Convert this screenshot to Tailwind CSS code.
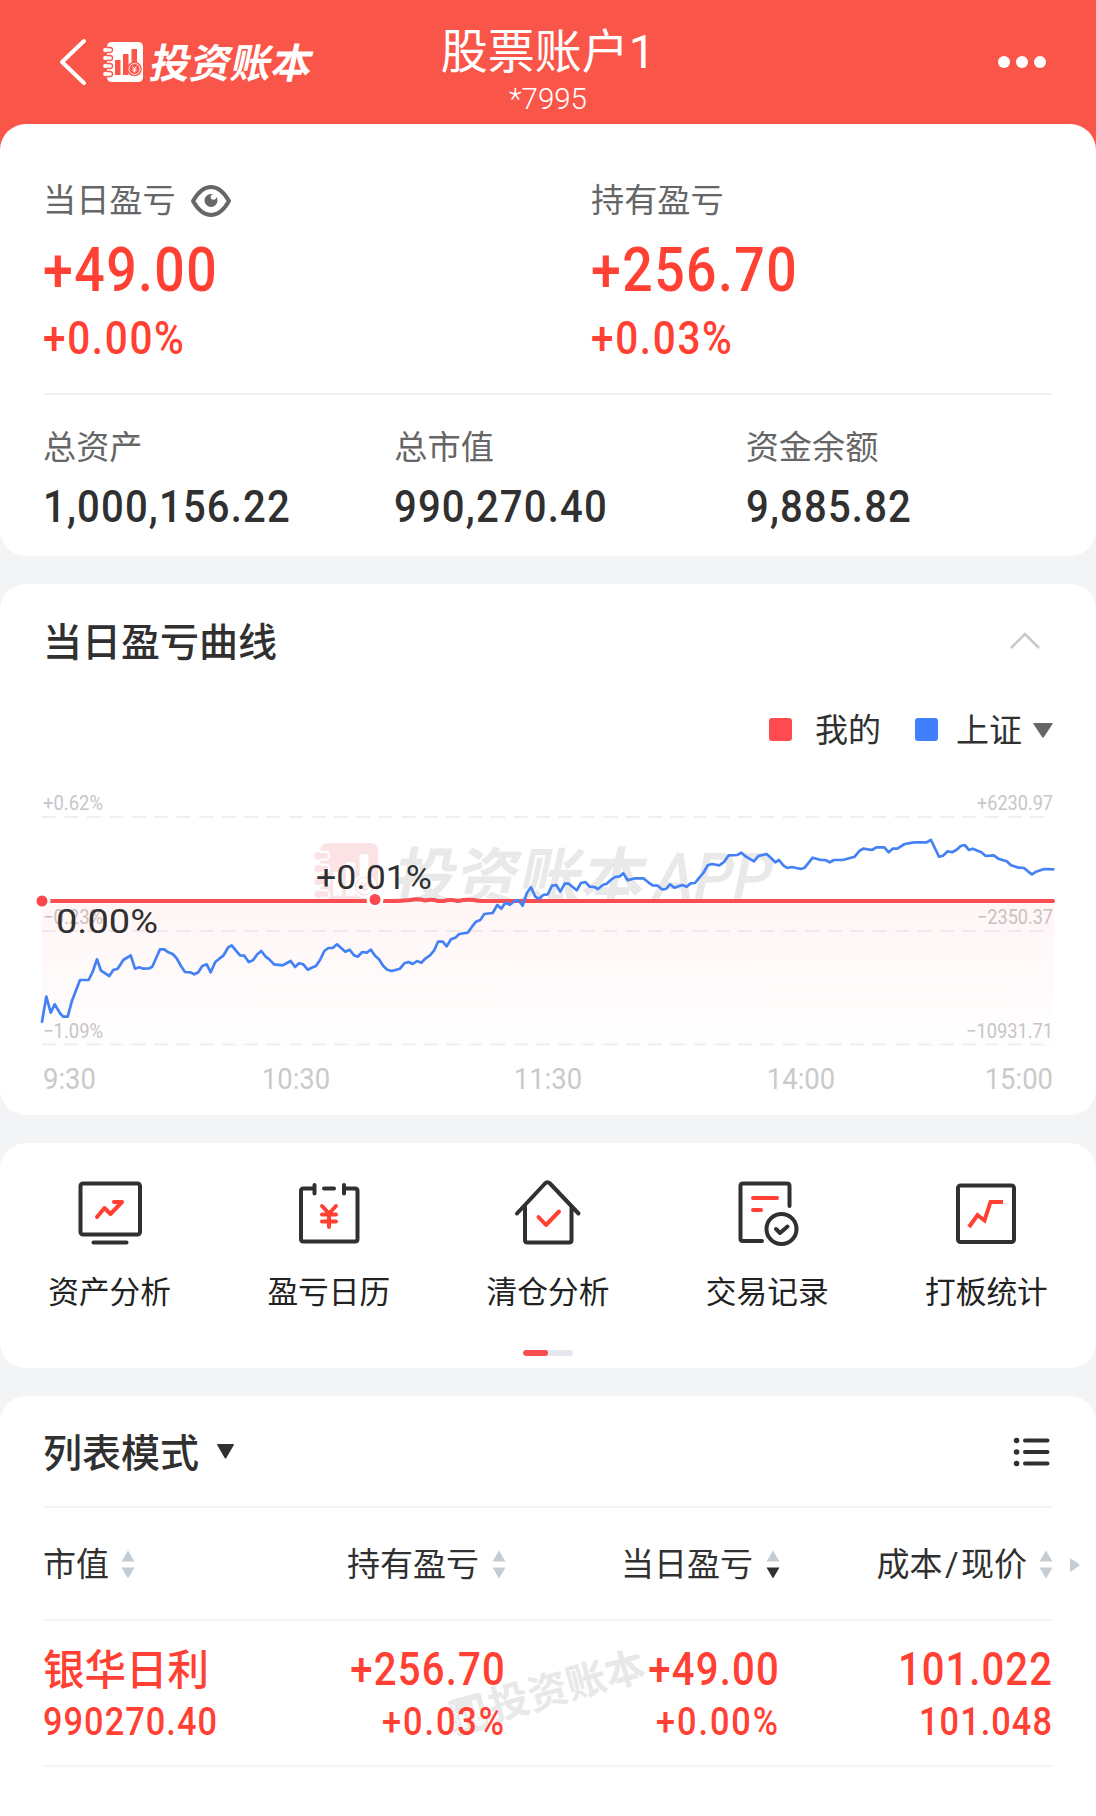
<!DOCTYPE html>
<html lang="zh-CN">
	<head>
		<title>投资账本 | 股票账户1</title>
		<meta charset="utf-8" />
		<meta name="viewport" content="width=device-width, initial-scale=1" />
		<script src="https://cdn.jsdelivr.net/npm/@tailwindcss/browser@4"></script>
	</head>
	<body class="bg-[#f3f4f6] text-[#303030] [font-family:Roboto,'Noto_Sans_CJK_SC',sans-serif]">
		<!-- shared notebook logo -->
		<svg class="hidden">
			<symbol id="logo" viewBox="0 0 40 40">
				<path
					fill-rule="evenodd"
					d="M9 0H35Q40 0 40 5V35Q40 40 35 40H9Q4 40 4 35V5Q4 0 9 0ZM12 18V33H17.500V18ZM20 12V33H25.500V12ZM28.500 7V20H34V7Z"
				/>
				<g fill="none" stroke="currentColor" stroke-width="4.6" stroke-linecap="round">
					<path d="M2.5 8H7M2.5 16H7M2.5 24H7M2.5 32H7" />
				</g>
				<g fill="none" stroke="var(--gap)" stroke-width="1.3" stroke-linecap="round">
					<path d="M4 5.5H7a2.5 2.5 0 0 1 0 5H4M4 13.5H7a2.5 2.5 0 0 1 0 5H4M4 21.5H7a2.5 2.5 0 0 1 0 5H4M4 29.5H7a2.5 2.5 0 0 1 0 5H4" />
				</g>
				<circle cx="31.5" cy="27" r="7.3" fill="var(--gap)" />
				<circle cx="31.5" cy="27" r="5.5" fill="none" stroke="currentColor" stroke-width=".9" />
				<path d="M29.5 24.500L31.5 26.500L33.500 24.500M29.5 27H33.500M29.500 28.800H33.500M31.500 26.500V30.500" fill="none" stroke="currentColor" stroke-width="1" />
			</symbol>
			<symbol id="sort-up" viewBox="0 0 14 12"><path d="M7 .5L13.5 11.5H.5Z" /></symbol>
			<symbol id="sort-down" viewBox="0 0 14 12"><path d="M.5 .5H13.5L7 11.5Z" /></symbol>
		</svg>

		<div class="bg-[#fa5549]">
			<header class="grid h-[124px] grid-cols-3 text-white">
				<div class="flex items-start pl-[58px] pt-[37px]">
					<svg class="h-[50px] w-[30px]" viewBox="0 0 30 50" fill="none" stroke="currentColor" stroke-width="4" stroke-linecap="round" stroke-linejoin="round">
						<path d="M26 4L4 25L26 46" />
					</svg>
					<svg class="ml-[15px] mt-[4.5px] h-[40px] w-[40px] [--gap:#fa5549]" fill="currentColor"><use href="#logo" /></svg>
					<span class="ml-[8px] mt-[5px] -skew-x-12 text-[40.5px] leading-[44px] font-bold whitespace-nowrap">投资账本</span>
				</div>
				<div class="flex flex-col items-center whitespace-nowrap">
					<h1 class="mt-[22px] pt-px text-[47px] leading-[57px] font-normal">股票账户1</h1>
					<p class="text-[29.5px] leading-[38px] font-light">*7995</p>
				</div>
				<div class="flex items-center justify-end gap-[6px] pr-[50px]">
					<i class="size-3 rounded-full bg-white"></i>
					<i class="size-3 rounded-full bg-white"></i>
					<i class="size-3 rounded-full bg-white"></i>
				</div>
			</header>
		</div>

		<!-- summary -->
		<div class="bg-linear-to-b from-[#fa5549] from-50% to-[#f3f4f6] to-50%">
			<section class="h-[432px] rounded-[26px] bg-white px-[43px] pt-[56px]">
				<div class="grid w-[1096px] grid-cols-2">
					<div>
						<div class="flex items-center text-[33.2px] leading-[40px] text-[#666]">
							<span class="pt-px">当日盈亏</span>
							<svg class="ml-[14px] h-[34px] w-[42px]" viewBox="0 0 42 34" fill="none" stroke="#666">
								<path d="M3 17Q11 3 21 3T39 17Q31 31 21 31T3 17Z" stroke-width="4" stroke-linejoin="round" />
								<circle cx="21" cy="16.5" r="6.5" fill="#666" stroke="none" />
								<circle cx="23.5" cy="13" r="2.8" fill="#fff" stroke="none" />
							</svg>
						</div>
						<p class="mt-[17px] origin-left scale-x-88 text-[61px] leading-[64px] font-medium tracking-[1.6px] text-[#ff4033]">+49.00</p>
						<p class="mt-[14px] origin-left scale-x-88 text-[46px] leading-[44px] font-medium tracking-[1.9px] text-[#ff4033]">+0.00%</p>
					</div>
					<div>
						<p class="pt-px text-[33.2px] leading-[40px] text-[#666]">持有盈亏</p>
						<p class="mt-[17px] origin-left scale-x-88 text-[61px] leading-[64px] font-medium tracking-[1.6px] text-[#ff4033]">+256.70</p>
						<p class="mt-[14px] origin-left scale-x-88 text-[46px] leading-[44px] font-medium tracking-[1.9px] text-[#ff4033]">+0.03%</p>
					</div>
				</div>
				<div class="mt-[33px] h-[2px] bg-[#f1f2f4]"></div>
				<div class="mt-[33px] grid w-[1054px] grid-cols-3">
					<div>
						<p class="text-[33.2px] leading-[40px] text-[#666]">总资产</p>
						<p class="mt-[17px] origin-left scale-x-90 text-[44.5px] leading-[44px] font-medium tracking-[1.3px]">1,000,156.22</p>
					</div>
					<div>
						<p class="text-[33.2px] leading-[40px] text-[#666]">总市值</p>
						<p class="mt-[17px] origin-left scale-x-90 text-[44.5px] leading-[44px] font-medium tracking-[1.3px]">990,270.40</p>
					</div>
					<div>
						<p class="text-[33.2px] leading-[40px] text-[#666]">资金余额</p>
						<p class="mt-[17px] origin-left scale-x-90 text-[44.5px] leading-[44px] font-medium tracking-[1.3px]">9,885.82</p>
					</div>
				</div>
			</section>
		</div>

		<!-- intraday curve -->
		<section class="mt-[28px] h-[531px] rounded-[26px] bg-white pt-[34px]">
			<div class="flex items-center justify-between pr-[55px] pl-[43px]">
				<h2 class="text-[39px] leading-[50px] font-medium">当日盈亏曲线</h2>
				<svg class="mb-[4px] h-[20px] w-[32px]" viewBox="0 0 32 20" fill="none" stroke="#c8c8c8" stroke-width="2.6"><path d="M2 17L16 3L30 17" /></svg>
			</div>
			<div class="mt-[42px] flex items-center justify-end pr-[43px] text-[33px] leading-[42px]">
				<i class="mb-[3px] size-[23px] rounded-[3px] bg-[#ff4b4f]"></i>
				<span class="ml-[23px]">我的</span>
				<i class="mb-[3px] ml-[34px] size-[23px] rounded-[3px] bg-[#427fff]"></i>
				<span class="ml-[18px]">上证</span>
				<svg class="mb-[2px] ml-[11px] h-[15px] w-[20px]" viewBox="0 0 20 15" fill="#666"><path d="M1 0H19Q20 0 19.500 1L11 14Q10 15 9 14L.5 1Q0 0 1 0Z" /></svg>
			</div>
			<svg class="mt-[28px] block h-[276px] w-full" viewBox="0 780 1096 276">
				<defs>
					<linearGradient id="fade" x1="0" y1="0" x2="0" y2="1">
						<stop offset="0" stop-color="#ff4b4f" stop-opacity="0.055" />
						<stop offset="1" stop-color="#ff4b4f" stop-opacity="0.005" />
					</linearGradient>
					<clipPath id="above"><rect x="300" y="830" width="520" height="72" /></clipPath>
				</defs>
				<g clip-path="url(#above)" fill="#e9e9ea" font-weight="700">
					<use href="#logo" x="314" y="843" width="64" height="64" fill="#fbe2e4" color="#fbe2e4" class="[--gap:#fff]" />
					<text transform="translate(390 900) skewX(-12)" font-size="63">投资账本</text>
					<text transform="translate(650 900) skewX(-12)" font-size="66" font-weight="500" textLength="118" lengthAdjust="spacingAndGlyphs">APP</text>
				</g>
				<path d="M42 817H1046M42 931H1046M42 1044.600H1046" stroke="#efeff0" stroke-width="2" stroke-dasharray="14 8.45" />
				<g font-size="20" fill="#c6c6c8">
					<text x="43" y="810" textLength="60" lengthAdjust="spacingAndGlyphs">+0.62%</text>
					<text x="43" y="924" textLength="60" lengthAdjust="spacingAndGlyphs">−0.23%</text>
					<text x="43" y="1037.500" textLength="60" lengthAdjust="spacingAndGlyphs">−1.09%</text>
					<g text-anchor="end">
						<text x="1053" y="810" textLength="76" lengthAdjust="spacingAndGlyphs">+6230.97</text>
						<text x="1053" y="924" textLength="76" lengthAdjust="spacingAndGlyphs">−2350.37</text>
						<text x="1053" y="1037.500" textLength="87" lengthAdjust="spacingAndGlyphs">−10931.71</text>
					</g>
				</g>
				<rect x="42" y="901" width="1012" height="144" fill="url(#fade)" />
				<path
					d="M42 901H398L410 900Q418 898.500 425 900.500Q432 899 438 901H444Q450 899 458 901Q466 899 474 900Q478 901 482 901H1053"
					fill="none"
					stroke="#f84d51"
					stroke-width="4"
					stroke-linecap="round"
				/>
				<polyline
					fill="none"
					stroke="#4381f4"
					stroke-width="2.7"
					stroke-linejoin="round"
					stroke-linecap="round"
					points="42,1021.7 46.3,996.7 50.7,1012.7 54.7,1004.3 60,1013.3 63.3,1016.7 67.7,1016.7 72,1000.7 80,980 88.7,980 92.7,971.7 97,959.3 101,970.7 109.3,976 113.3,970 117.7,968.7 123.3,960 130.7,955.3 135,968.7 139.3,967.3 143.3,968.7 149.3,968.3 152.3,966.7 160,949.3 164.3,949.3 168.3,952.3 172.7,954 176.7,958.3 181,966 185,972 190,972.3 194.3,974.3 198.3,972.3 202.3,966 206.7,964.3 210.7,972.3 215.3,962 219.3,958.7 223.3,955.7 228.3,947.3 231.7,945.3 236,950.7 240,955.3 244.3,955.7 248.7,962 253,960.3 257.3,954.3 261.3,951 265.7,956.7 269.3,959.3 274,964.3 282.7,965.3 290.7,961 295,967 299,963.3 303.3,964.3 307.7,969.7 311.7,967.7 316,966 320,960 324.3,951 328.3,948 332.7,948 337,944.3 345.3,951.7 349.7,949.7 354,955.3 357.7,956.7 362.3,952 366.7,952.7 371,949.7 375,955.7 379,959.3 383.3,966 387.3,969.7 391.7,971 400,968.7 404.3,963.3 408.7,962 412.7,964 417,961 421.3,962.7 425.7,958.3 429.7,955.7 434,950.7 438,941.7 442.7,941.7 446.7,946.3 451,939.3 455.3,937.7 459.3,934 467.7,932.7 472,926.7 476,921.7 480.3,920 484.3,914 492.7,913 497.3,905 501.3,908.7 505.3,902.7 510,904.7 514,901.3 518.3,900 522.7,905.7 526.7,893.3 531,887.3 535.3,896.7 538.7,899 543.3,895 547.7,894.3 552,885.7 556.3,885 560.3,891.7 564.7,883.7 568.7,883.7 576.7,890.3 581,883 585.3,882 589.7,886.7 594.3,887 598,889 602.7,885 606.7,883.7 610.7,880 615,877 620,876.3 623.3,873.3 627.7,880.3 635,878.3 643.3,878.3 648.3,882.3 652.7,885.3 657.7,885.7 662,889.3 666,889 670,884.3 674.3,887.7 682.3,885 686.7,886.7 690.7,883.3 695,883 699.3,877.7 703.3,873 707.7,865.3 712,864 719.3,865.3 724,862 728.7,855.3 737.3,855 741.3,852.7 746,856.7 754,861.3 758.3,856 766.7,854 771,858 775.3,862.3 779,860 783.3,865.3 787.3,868 792,867 800.7,869 804.7,867.7 812.7,857.7 820.7,860 825.3,860 829.7,862.3 834,860 842.7,860 854.7,856.7 859.3,851 863.3,848.7 872,850 876.3,847.3 884.3,847.3 888.7,852.3 892.7,848.7 897.3,848.7 904.7,844 914.3,842.3 926.7,842.3 931,840 935.3,849 939,856.7 943,855.7 947.7,851.3 952,852.3 956.7,849.7 960.7,846 964.7,845 969,850 972.7,848.7 981.3,852.3 985.7,856 993.7,855.3 998.3,858.7 1006.7,861.3 1011,865.3 1018.7,867.7 1024,868 1028,871.3 1032,874.3 1036,871.7 1044.3,869 1053.3,869.3"
				/>
				<g fill="#fb484c" stroke="#fff" stroke-width="3">
					<circle cx="42" cy="901" r="7" />
					<circle cx="375" cy="899.500" r="7" />
				</g>
				<g font-size="34" fill="#303030">
					<text x="316" y="889" textLength="116" lengthAdjust="spacingAndGlyphs">+0.01%</text>
					<text x="56" y="933" textLength="102" lengthAdjust="spacingAndGlyphs">0.00%</text>
				</g>
			</svg>
			<div class="mt-[2px] flex justify-between px-[43px] text-[29.500px] leading-[42px] text-[#cacaca]">
				<span class="w-[108px] origin-left scale-x-93">9:30</span>
				<span class="w-[146px] scale-x-93 text-center">10:30</span>
				<span class="w-[216px] scale-x-93 text-center">11:30</span>
				<span class="w-[146px] scale-x-93 text-center">14:00</span>
				<span class="w-[108px] origin-right scale-x-93 text-right">15:00</span>
			</div>
		</section>

		<!-- tools -->
		<section class="mt-[28px] h-[225px] rounded-[26px] bg-white pt-[33px]">
			<div class="grid grid-cols-5 text-center text-[30.700px] leading-[40px] text-[#222]">
				<div class="flex flex-col items-center">
					<svg class="size-[72px]" viewBox="0 0 72 72" fill="none" stroke="#303030" stroke-width="4" stroke-linecap="round" stroke-linejoin="round">
						<rect x="6.500" y="7.500" width="59.500" height="51" rx="2.500" />
						<path d="M19.500 66.500H52.500" />
						<path d="M23 41L30.500 32L36.500 38L48 26H40" stroke="#ff4033" />
					</svg>
					<span class="mt-[25px]">资产分析</span>
				</div>
				<div class="flex flex-col items-center">
					<svg class="size-[72px]" viewBox="0 0 72 72" fill="none" stroke="#303030" stroke-width="4" stroke-linecap="round" stroke-linejoin="round">
						<path d="M21 12.500H10.500Q8 12.500 8 15V63Q8 65.500 10.500 65.500H62Q64.500 65.500 64.500 63V15Q64.500 12.500 62 12.500H51" />
						<path d="M21.500 9V17.500M51 9V17.500M31 12.500H41" />
						<path d="M29 30L36 37.500L43 30M29 38.500H43M29 45.500H43M36 37.500V51" stroke="#ff4033" />
					</svg>
					<span class="mt-[25px]">盈亏日历</span>
				</div>
				<div class="flex flex-col items-center">
					<svg class="size-[72px]" viewBox="0 0 72 72" fill="none" stroke="#303030" stroke-width="4" stroke-linecap="round" stroke-linejoin="round">
						<path d="M5 37.500L33 7.500Q35.500 5 38 7.500L66.500 37.500" />
						<path d="M13 31V64Q13 66.500 15.500 66.500H57Q59.500 66.500 59.500 64V31" />
						<path d="M26.500 41L34 49L47 35.500" stroke="#ff4033" />
					</svg>
					<span class="mt-[25px]">清仓分析</span>
				</div>
				<div class="flex flex-col items-center">
					<svg class="size-[72px]" viewBox="0 0 72 72" fill="none" stroke="#303030" stroke-width="4" stroke-linecap="round" stroke-linejoin="round">
						<path d="M58.500 30V10Q58.500 7.500 56 7.500H12Q9.500 7.500 9.500 10V62.500Q9.500 65 12 65H31" />
						<circle cx="50.500" cy="53" r="15" />
						<path d="M45 53L49 57L56.500 50.500" />
						<path d="M22 22H46M22 34H30" stroke="#ff4033" />
					</svg>
					<span class="mt-[25px]">交易记录</span>
				</div>
				<div class="flex flex-col items-center">
					<svg class="size-[72px]" viewBox="0 0 72 72" fill="none" stroke="#303030" stroke-width="4" stroke-linejoin="round">
						<rect x="8" y="9.500" width="56" height="56.500" rx="2.500" />
						<path d="M19 51L27.500 39L34.500 44.500L40.500 26H53" stroke="#ff4033" stroke-linejoin="miter" />
					</svg>
					<span class="mt-[25px]">打板统计</span>
				</div>
			</div>
			<div class="mx-auto mt-[37px] h-[6px] w-[50px] overflow-hidden rounded-full bg-[#e5e6ee]">
				<div class="h-full w-1/2 rounded-full bg-[#f84d51]"></div>
			</div>
		</section>

		<!-- holdings -->
		<section class="mt-[28px] h-[420px] rounded-t-[26px] bg-white px-[43px]">
			<div class="flex h-[110px] items-center justify-between pt-[5px]">
				<h2 class="flex items-center pt-[2px] text-[39px] font-medium">
					列表模式
					<svg class="mt-[-7px] ml-[18px] h-[15px] w-[17px]" viewBox="0 0 17 15" fill="#303030"><path d="M1 0H16Q17.500 0 16.700 1.200L9.300 14Q8.500 15 7.700 14L.3 1.200Q-.5 0 1 0Z" /></svg>
				</h2>
				<svg class="mr-[3px] mb-[3px] h-[32px] w-[37px]" viewBox="0 0 37 32" fill="none" stroke="#303030" stroke-linecap="round">
					<path d="M12 4.500H34.500M12 16H34.500M12 27.500H34.500" stroke-width="4" />
					<path d="M3.500 4.500H3.600M3.500 16H3.600M3.500 27.500H3.600" stroke-width="5.500" />
				</svg>
			</div>
			<div class="h-[113px] border-t-2 border-[#f4f5f6]">
				<div class="grid h-full w-[1037px] grid-cols-[1fr_auto_auto_auto_auto] items-center pt-[2px] text-[33px]">
					<div class="flex items-center">
						<span class="pt-px">市值</span>
						<span class="ml-[12px] flex flex-col gap-[5px] fill-[#c5cdd4]"><svg class="h-3 w-3.5"><use href="#sort-up" /></svg><svg class="h-3 w-3.5"><use href="#sort-down" /></svg></span>
					</div>
					<div class="flex items-center">
						<span class="pt-px">持有盈亏</span>
						<span class="ml-[13px] flex flex-col gap-[5px] fill-[#c5cdd4]"><svg class="h-3 w-3.5"><use href="#sort-up" /></svg><svg class="h-3 w-3.5"><use href="#sort-down" /></svg></span>
					</div>
					<div class="flex w-[274px] items-center justify-end">
						<span class="pt-px">当日盈亏</span>
						<span class="ml-[13px] flex flex-col gap-[5px] fill-[#c5cdd4]"><svg class="h-3 w-3.5"><use href="#sort-up" /></svg><svg class="h-3 w-3.5 fill-[#303030]"><use href="#sort-down" /></svg></span>
					</div>
					<div class="flex w-[273px] items-center justify-end">
						<span class="pt-px">成本<span class="px-[2.500px]">/</span>现价</span>
						<span class="ml-[12px] flex flex-col gap-[5px] fill-[#c5cdd4]"><svg class="h-3 w-3.5"><use href="#sort-up" /></svg><svg class="h-3 w-3.5"><use href="#sort-down" /></svg></span>
					</div>
					<svg class="ml-[16px] h-[14px] w-[11px]" viewBox="0 0 11 14" fill="#c5cdd4"><path d="M1 0L10 6Q11 7 10 8L1 14Z" /></svg>
				</div>
			</div>
			<div class="relative h-[148px] border-y-2 border-[#f4f5f6]">
				<div class="absolute top-[50px] left-[402px] flex -rotate-[15.500deg] items-center gap-[5px] text-[40px] leading-[44px] font-bold whitespace-nowrap text-[#e8e8e8]">
					<svg class="size-[38px] [--gap:#fff]" fill="currentColor"><use href="#logo" /></svg>
					<span>投资账本</span>
				</div>
				<div class="relative grid grid-cols-[1fr_auto_274px_273px] pt-[25px] text-right font-medium text-[#ff4033]">
					<div class="text-left">
						<p class="text-[41.500px] leading-[50px]">银华日利</p>
						<p class="mt-[1px] origin-left scale-x-88 text-[39px] leading-[50px] tracking-[1.2px]">990270.40</p>
					</div>
					<div>
						<p class="origin-right scale-x-88 text-[45.500px] leading-[48px] tracking-[1.4px]">+256.70</p>
						<p class="mt-[3px] origin-right scale-x-88 text-[39px] leading-[50px] tracking-[2.2px]">+0.03%</p>
					</div>
					<div>
						<p class="origin-right scale-x-88 text-[45.500px] leading-[48px] tracking-[1.4px]">+49.00</p>
						<p class="mt-[3px] origin-right scale-x-88 text-[39px] leading-[50px] tracking-[2.2px]">+0.00%</p>
					</div>
					<div>
						<p class="origin-right scale-x-88 text-[45.500px] leading-[48px] tracking-[1.2px]">101.022</p>
						<p class="mt-[3px] origin-right scale-x-88 text-[39px] leading-[50px] tracking-[1.2px]">101.048</p>
					</div>
				</div>
			</div>
		</section>
	</body>
</html>
